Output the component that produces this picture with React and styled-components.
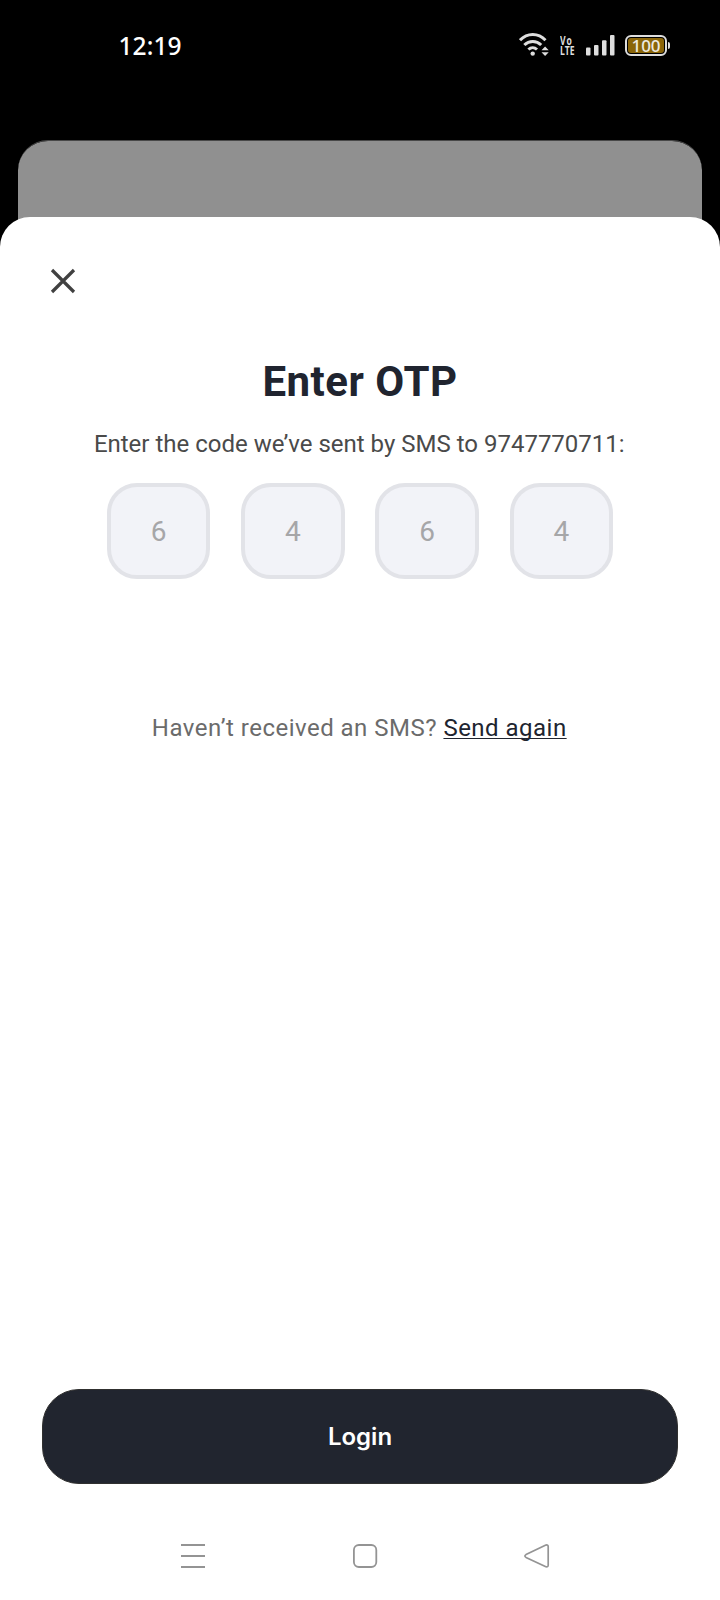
import React from "react";
import styled, { createGlobalStyle } from "styled-components";

const GlobalStyle = createGlobalStyle`
  *, *::before, *::after { box-sizing: border-box; }
  body { margin: 0; background: #000; font-family: Roboto, sans-serif; }
  svg { display: block; flex: none; }
`;

const Screen = styled.div`
  width: 720px;
  height: 1600px;
  display: flex;
  flex-direction: column;
  background: #000;
  overflow: hidden;
`;

const StatusBar = styled.header`
  height: 140px;
  flex: none;
  padding: 30px 50px 0 118.5px;
  display: flex;
  justify-content: space-between;
  align-items: flex-start;
`;

const Clock = styled.time`
  font: 500 24.5px/31px "Noto Sans", sans-serif;
  letter-spacing: 0.1px;
  color: #fff;
`;

const StatusIcons = styled.div`
  height: 30px;
  display: flex;
  align-items: center;
`;

const VoLte = styled.div`
  width: 16px;
  margin: 0 10px 0 11px;
  color: #dedede;
`;

const VoLteText = styled.div`
  width: max-content;
  font: 700 13px/10.5px "Open Sans", sans-serif;
  transform: scaleX(0.66);
  transform-origin: left;

  &::first-line {
    letter-spacing: 1.5px;
  }
`;

const Battery = styled.div`
  width: 42px;
  height: 21px;
  margin-left: 10px;
  padding: 1px;
  border: 2px solid #dedede;
  border-radius: 6px;
`;

const BatteryLevel = styled.div`
  height: 100%;
  border-radius: 3px;
  background: #8a6508;
  color: #eeeae0;
  text-align: center;
  font: 500 17px/15px "Noto Sans", sans-serif;
`;

const BatteryTip = styled.div`
  width: 2px;
  height: 7px;
  margin-left: 1px;
  border-radius: 0 2px 2px 0;
  background: #dedede;
`;

const BackCard = styled.div`
  height: 110px;
  flex: none;
  margin: 0 18.4px -33px;
  border-top: 1px solid #484848;
  border-radius: 30px 30px 0 0;
  background: #909090;
  background-clip: padding-box;
`;

const Sheet = styled.main`
  flex: 1;
  display: flex;
  flex-direction: column;
  align-items: center;
  border-radius: 30px 30px 0 0;
  background: #fff;
  z-index: 1;
`;

const CloseButton = styled.button`
  align-self: flex-start;
  margin: 51px 0 0 50px;
  padding: 0;
  border: 0;
  background: none;
`;

const Title = styled.h1`
  margin: 63px 0 0;
  font-size: 42px;
  line-height: 50px;
  font-weight: 700;
  letter-spacing: 0.5px;
  color: #20242f;
`;

const Message = styled.p`
  margin: 23px 1.5px 0 0;
  font-size: 24px;
  line-height: 28px;
  white-space: nowrap;
  letter-spacing: ${(p) => p.$tracking};
  color: ${(p) => p.$color};
`;

const CodeRow = styled.div`
  margin-top: 25px;
  display: flex;
  gap: 30.8px;
`;

const CodeCell = styled.div`
  width: 103.4px;
  height: 96px;
  display: flex;
  align-items: center;
  justify-content: center;
  border: 4px solid #e2e3e8;
  border-radius: 30px;
  background: #f2f3f8;
  font-size: 28px;
  color: #a6a6a8;
`;

const ResendMessage = styled(Message)`
  margin-top: 135px;
`;

const ResendLink = styled.a`
  color: #20242f;
  text-decoration: underline;
  text-decoration-thickness: 1px;
  text-underline-offset: 2px;
  text-decoration-skip-ink: none;
`;

const LoginButton = styled.button`
  width: 636px;
  height: 95px;
  margin-top: auto;
  padding: 1px 0 0;
  border: 1px solid #30302f;
  border-radius: 37px;
  background: #21252f;
  color: #fff;
  font: 600 24px/30px Inter, sans-serif;
`;

const NavBar = styled.nav`
  width: 100%;
  height: 116px;
  padding: 58px 170px 0 180px;
  display: flex;
  justify-content: space-between;
  align-items: flex-start;
`;

const WifiIcon = () => (
  <svg width="30" height="24" viewBox="0 0 30 24" fill="none">
    <path d="M1 7.2C8.3-.3 19.2-.3 26.5 7.2M5.3 12c4.9-4.8 12-4.8 16.9 0M9.4 16.5c2.6-2.4 6-2.4 8.6 0" stroke="#dedede" strokeWidth="3" />
    <circle cx="13.7" cy="20.6" r="2.2" fill="#dedede" />
    <path d="m22.5 17.2 3.6-3.8 3.6 3.8zM22.5 19.2h7.2L26.1 23z" fill="#dedede" />
  </svg>
);

const SignalIcon = () => (
  <svg width="29" height="21" viewBox="0 0 29 21" fill="#dedede">
    <rect x="0" y="12.5" width="4.5" height="8" rx="1" />
    <rect x="8" y="10" width="4.5" height="10.5" rx="1" />
    <rect x="16" y="5.3" width="4.5" height="15.2" rx="1" />
    <rect x="24" y="0" width="4.5" height="20.5" rx="1" />
  </svg>
);

export default function App() {
  return (
    <>
      <GlobalStyle />
      <Screen>
        <StatusBar>
          <Clock>12:19</Clock>
          <StatusIcons>
            <WifiIcon />
            <VoLte>
              <VoLteText>
                Vo
                <br />
                LTE
              </VoLteText>
            </VoLte>
            <SignalIcon />
            <Battery>
              <BatteryLevel>100</BatteryLevel>
            </Battery>
            <BatteryTip />
          </StatusIcons>
        </StatusBar>
        <BackCard />
        <Sheet>
          <CloseButton aria-label="Close">
            <svg width="26" height="26" viewBox="0 0 26 26">
              <path d="m2 2 22 22M24 2 2 24" stroke="#404040" strokeWidth="3.2" />
            </svg>
          </CloseButton>
          <Title>Enter OTP</Title>
          <Message $color="#4a4a4a" $tracking="0">
            Enter the code we’ve sent by SMS to 9747770711:
          </Message>
          <CodeRow>
            {["6", "4", "6", "4"].map((digit, i) => (
              <CodeCell key={i}>{digit}</CodeCell>
            ))}
          </CodeRow>
          <ResendMessage $color="#6b6b6b" $tracking="0.48px">
            Haven’t received an SMS? <ResendLink>Send again</ResendLink>
          </ResendMessage>
          <LoginButton>Login</LoginButton>
          <NavBar>
            <svg width="26" height="28" viewBox="0 0 26 28" fill="none" stroke="#949494" strokeWidth="2">
              <path d="M1 3h24M1 14h24M1 25h24" />
            </svg>
            <svg width="26" height="28" viewBox="0 0 26 28" fill="none" stroke="#949494" strokeWidth="1.8">
              <rect x="1.9" y="3" width="22.4" height="22" rx="5" />
            </svg>
            <svg width="26" height="28" viewBox="0 0 26 28" fill="none" stroke="#949494" strokeWidth="1.7" strokeLinejoin="round">
              <path d="M21.9 3.1 2 12.6q-2.2 1.4 0 2.8l19.9 9.3q2.2.6 2.3-1.5V4.6q-.1-2.1-2.3-1.5z" />
            </svg>
          </NavBar>
        </Sheet>
      </Screen>
    </>
  );
}
